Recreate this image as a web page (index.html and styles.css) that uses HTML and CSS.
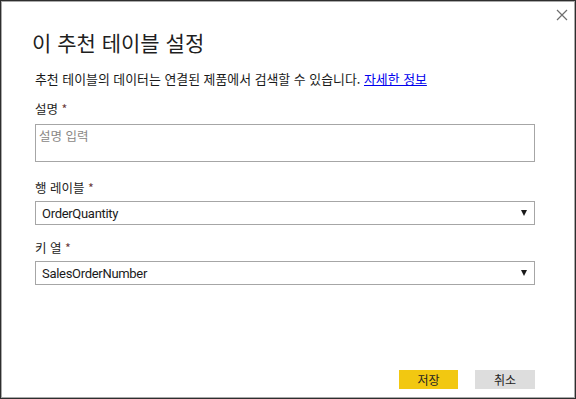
FILE: index.html
```html
<!DOCTYPE html>
<html lang="ko">
<head>
<meta charset="utf-8">
<link rel="stylesheet" href="styles.css">
</head>
<body>
<div class="dialog">
  <button class="close" aria-label="닫기">
    <svg width="12" height="12" viewBox="0 0 12 12"><path d="M1 1 L11 11 M11 1 L1 11" stroke="#6e6e6e" stroke-width="1.2" fill="none"/></svg>
  </button>
  <h1 class="title">이 추천 테이블 설정</h1>
  <p class="desc">추천 테이블의 데이터는 연결된 제품에서 검색할 수 있습니다. <a class="link" href="#">자세한 정보</a></p>
  <div class="field field-desc">
    <label class="label">설명 <span class="req">*</span></label>
    <textarea class="textarea" placeholder="설명 입력"></textarea>
  </div>
  <div class="field field-row">
    <label class="label">행 레이블 <span class="req">*</span></label>
    <div class="select"><span class="value">OrderQuantity</span><span class="arrow"></span></div>
  </div>
  <div class="field field-key">
    <label class="label">키 열 <span class="req">*</span></label>
    <div class="select"><span class="value">SalesOrderNumber</span><span class="arrow"></span></div>
  </div>
  <div class="footer">
    <button class="btn btn-primary">저장</button>
    <button class="btn btn-secondary">취소</button>
  </div>
</div>
</body>
</html>
```
FILE: styles.css
```css
html, body {
  margin: 0;
  padding: 0;
  background: #fff;
}
.dialog {
  position: relative;
  width: 576px;
  height: 399px;
  box-sizing: border-box;
  border: 1px solid #2e2e2e;
  box-shadow: inset 0 0 0 1px #a9a9a9;
  background: #fff;
  padding: 27px 40px 9px 34px;
  display: flex;
  flex-direction: column;
  font-family: "Noto Sans CJK KR", "Noto Sans", sans-serif;
  color: #252423;
}
.close {
  position: absolute;
  top: 7px;
  right: 6px;
  width: 14px;
  height: 14px;
  padding: 0;
  border: 0;
  background: none;
  display: flex;
  align-items: center;
  justify-content: center;
}
.title {
  margin: 0 0 0 -3px;
  font-size: 21px;
  font-weight: 400;
  line-height: 28px;
  color: #1f1f1f;
}
.desc {
  margin: 15px 0 0 0;
  font-size: 12.9px;
  line-height: 16px;
  color: #1a1a1a;
}
.link {
  color: #0000ee;
  text-decoration: underline;
}
.field {
  display: flex;
  flex-direction: column;
}
.label {
  font-size: 12.5px;
  line-height: 16px;
  margin-bottom: 5px;
  color: #252423;
}
.field-desc .label {
  margin-top: 14px;
  margin-bottom: 7px;
}
.field-row .label {
  margin-top: 18px;
}
.field-key .label {
  margin-top: 15px;
}
.req {
  color: #6b3a3a;
}
.textarea {
  box-sizing: border-box;
  width: 500px;
  height: 38px;
  margin: 0;
  border: 1px solid #a6a6a6;
  border-radius: 0;
  padding: 3px 3px;
  resize: none;
  font-family: "Noto Sans CJK KR", "Noto Sans", sans-serif;
  font-size: 12.5px;
  line-height: 16px;
  color: #252423;
  outline: none;
}
.textarea::placeholder {
  color: #8a8886;
}
.select {
  box-sizing: border-box;
  width: 500px;
  height: 24px;
  border: 1px solid #a6a6a6;
  padding: 0 7px 0 6px;
  display: flex;
  align-items: center;
  justify-content: space-between;
}
.value {
  font-family: Roboto, "Liberation Sans", sans-serif;
  font-size: 13px;
  letter-spacing: -0.3px;
  color: #1a1a1a;
}
.arrow {
  width: 0;
  height: 0;
  border-left: 3.5px solid transparent;
  border-right: 3.5px solid transparent;
  border-top: 6px solid #1a1a1a;
}
.footer {
  margin-top: auto;
  display: flex;
  justify-content: flex-end;
  gap: 17px;
}
.btn {
  width: 59px;
  height: 19px;
  border: 0;
  padding: 0;
  font-family: "Noto Sans CJK KR", sans-serif;
  font-size: 12px;
  line-height: 19px;
  color: #252423;
}
.btn-primary {
  background: #f2c811;
}
.btn-secondary {
  width: 60px;
  background: #dddddd;
}
```
